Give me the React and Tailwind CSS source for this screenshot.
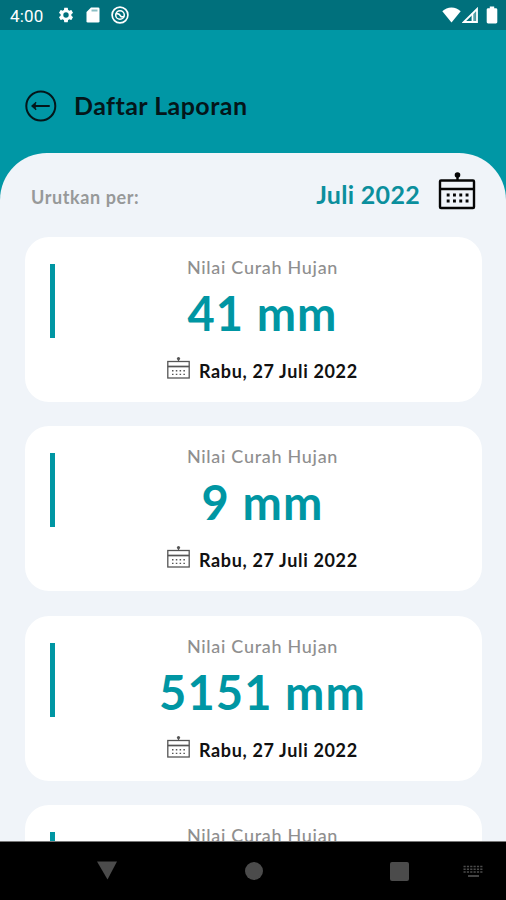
import React from 'react';

const reports = [
  { id: 1, value: 41, date: 'Rabu, 27 Juli 2022' },
  { id: 2, value: 9, date: 'Rabu, 27 Juli 2022' },
  { id: 3, value: 5151, date: 'Rabu, 27 Juli 2022' },
  { id: 4 },
];

function StatusBar() {
  return (
    <div className="flex h-[30px] shrink-0 items-center bg-[#00707c] pl-[10px] pr-[8px] text-white">
      <span className="w-[47px] pt-[2px] font-['Roboto',sans-serif] text-[17px] leading-[30px] tracking-[0.2px]">4:00</span>
      {/* Settings */}
      <svg className="h-[18px] w-[18px]" viewBox="0 0 24 24" fill="currentColor">
        <path d="M19.14 12.94c.04-.3.06-.61.06-.94 0-.32-.02-.64-.07-.94l2.03-1.58a.49.49 0 0 0 .12-.61l-1.92-3.32a.488.488 0 0 0-.59-.22l-2.39.96c-.5-.38-1.03-.7-1.62-.94l-.36-2.54a.484.484 0 0 0-.48-.41h-3.84c-.24 0-.43.17-.47.41l-.36 2.54c-.59.24-1.13.57-1.62.94l-2.39-.96a.488.488 0 0 0-.59.22L2.74 8.87c-.12.21-.08.47.12.61l2.03 1.58c-.05.3-.09.63-.09.94s.02.64.07.94l-2.03 1.58a.49.49 0 0 0-.12.61l1.92 3.32c.12.22.37.29.59.22l2.39-.96c.5.38 1.03.7 1.62.94l.36 2.54c.05.24.24.41.48.41h3.84c.24 0 .44-.17.47-.41l.36-2.54c.59-.24 1.13-.56 1.62-.94l2.39.96c.22.08.47 0 .59-.22l1.92-3.32a.49.49 0 0 0-.12-.61zM12 15.6A3.6 3.6 0 1 1 12 8.4a3.6 3.6 0 0 1 0 7.2z" />
      </svg>
      {/* SD card */}
      <svg className="ml-[11px] h-[16px] w-[14px]" viewBox="0 0 14 16" fill="currentColor">
        <path d="M5 .5h7.2a1.3 1.3 0 0 1 1.3 1.3v12.4a1.3 1.3 0 0 1-1.3 1.3H1.8A1.3 1.3 0 0 1 .5 14.200V5z" />
        <path d="M5.500 3.500h6" stroke="#00707c" strokeOpacity=".45" strokeWidth="2" />
      </svg>
      <svg className="ml-[11px] h-[18px] w-[18px]" viewBox="0 0 18 18" fill="none" stroke="currentColor">
        <circle cx="9" cy="9" r="7.900" strokeWidth="1.700" />
        <circle cx="9" cy="9" r="4.300" strokeWidth="1.500" />
        <path d="M5 7.800c2.800-.6 4 1 4.500 2s2.200 1.200 3.700.700" strokeWidth="1.600" />
      </svg>
      {/* Wifi, signal, battery */}
      <svg className="ml-auto h-[16px] w-[19px]" viewBox="0 0 19 16" fill="currentColor">
        <path d="M9.500 15.500L.3 4.300C2.800 1.800 6 .5 9.500.5s6.700 1.300 9.200 3.800z" />
      </svg>
      <svg className="ml-[1px] h-[16px] w-[16px]" viewBox="0 0 16 16" fill="none" stroke="currentColor">
        <path d="M1.800 15H15V2z" strokeWidth="1.800" />
        <path d="M10.500 6.500V15" strokeWidth="1.800" />
        <path d="M12.600 5v9" strokeOpacity=".35" strokeWidth="2.500" />
      </svg>
      <svg className="ml-[8px] h-[18px] w-[12px]" viewBox="0 0 12 18" fill="currentColor">
        <path d="M3.800.5h4.400v1.800h1.700c.8 0 1.400.6 1.400 1.400v12.400c0 .8-.6 1.400-1.400 1.400H2.100c-.8 0-1.400-.6-1.400-1.400V3.700c0-.8.6-1.400 1.400-1.400h1.700z" />
      </svg>
    </div>
  );
}

function CalendarIcon() {
  return (
    <svg className="h-[38px] w-[38px]" viewBox="0 0 38 38" fill="none" stroke="#050505">
      <rect x="2" y="8.500" width="34" height="27.500" rx="1" strokeWidth="2.400" />
      <path d="M2 17h34" strokeWidth="2.400" />
      <path d="M19.500 3v6" strokeWidth="2.400" />
      <circle cx="19.500" cy="3" r="2.800" fill="#050505" stroke="none" />
      <path d="M8.700 23h22M8.700 29h22" strokeWidth="2.900" strokeDasharray="2.900 3.400" />
    </svg>
  );
}

function SmallCalendarIcon() {
  return (
    <svg className="h-[23px] w-[23px]" viewBox="0 0 23 23" fill="none" stroke="#555">
      <rect x=".8" y="4.500" width="21.400" height="16.500" strokeWidth="1.300" />
      <path d="M.8 9.500h21.400" strokeWidth="1.700" />
      <path d="M11.500 1.500V5" strokeWidth="1.300" />
      <circle cx="11.500" cy="1.600" r="1.600" fill="#555" stroke="none" />
      <path d="M5 13.800h14M5 17.400h14" strokeWidth="1.400" strokeDasharray="1.500 2.300" />
    </svg>
  );
}

function ReportCard({ report }) {
  return (
    <div className="relative flex h-[165px] shrink-0 flex-col items-center rounded-[24px] bg-white">
      <span className="absolute left-[25px] top-[27px] h-[74px] w-[5px] bg-[#0096a3]" />
      <p className="mt-[17px] pl-[18px] text-[18px] font-medium leading-[26px] tracking-[0.7px] text-[#8f8f8f]">
        Nilai Curah Hujan
      </p>
      {report.date && (
        <>
          <p className="mt-[7px] pl-[18px] text-[47px] font-bold leading-[52px] tracking-[1.1px] text-[#0096a3]">
            {report.value} mm
          </p>
          <div className="mt-[16px] flex w-full items-center pl-[142px]">
            <SmallCalendarIcon />
            <span className="ml-[9px] mt-[5px] whitespace-nowrap text-[18px] font-bold leading-[22px] tracking-[0.65px] text-[#111]">
              {report.date}
            </span>
          </div>
        </>
      )}
    </div>
  );
}

function NavBar() {
  return (
    <div className="flex h-[59px] shrink-0 items-start border-t border-[#777] bg-black pl-[96px] pt-[18px] text-[#4b4b4b]">
      <svg className="mt-[1px] h-[19px] w-[22px]" viewBox="0 0 22 19" fill="currentColor">
        <path d="M1 .5h20L11.500 18.500z" />
      </svg>
      <span className="ml-[127px] mt-[2px] h-[18px] w-[18px] rounded-full bg-[#4b4b4b]" />
      <span className="ml-[127px] mt-[2px] h-[19px] w-[19px] rounded-[2px] bg-[#4b4b4b]" />
      <svg className="ml-[53px] mt-[5px] h-[13px] w-[22px]" viewBox="0 0 22 13" fill="none" stroke="currentColor">
        <path d="M1.500 1.500h19M1.500 4.300h19M1.500 7h19" strokeWidth="1.500" strokeDasharray="2.200 1.150" />
        <path d="M6 11h11" strokeWidth="1.800" />
      </svg>
    </div>
  );
}

export default function App() {
  return (
    <div className="flex h-[900px] w-[506px] flex-col overflow-hidden bg-[#0097a5] font-['Lato','Open_Sans',sans-serif]">
      <StatusBar />

      <header className="flex h-[123px] shrink-0 items-center pl-[25px] pt-[28px]">
        <svg className="h-[32px] w-[32px]" viewBox="0 0 32 32" fill="none" stroke="#04161a">
          <circle cx="15.800" cy="16" r="14.500" strokeWidth="2" />
          <path d="M8 16h16" strokeWidth="2" strokeLinecap="round" />
          <path d="M11 12L6.500 16l4.500 4-1-4z" fill="#04161a" strokeWidth=".8" />
        </svg>
        <h1 className="mb-[2px] ml-[17px] text-[25px] font-bold leading-[32px] tracking-[0.45px] text-[#04161a]">
          Daftar Laporan
        </h1>
      </header>

      <main className="flex min-h-0 flex-1 flex-col overflow-hidden rounded-t-[47px] bg-[#f0f4f9]">
        <div className="flex h-[84px] shrink-0 items-center pl-[31px] pr-[29px]">
          <span className="mt-[4px] text-[18px] font-bold tracking-[0.6px] text-[#979999]">Urutkan per:</span>
          <span className="ml-auto text-[25px] font-bold tracking-[0.3px] text-[#0b8f9d]">Juli 2022</span>
          <span className="mb-[9px] ml-[18px] mr-[1px]">
            <CalendarIcon />
          </span>
        </div>
        <div className="flex min-h-0 flex-1 flex-col gap-[24.49px] overflow-hidden pl-[25px] pr-[24px]">
          {reports.map((report) => (
            <ReportCard key={report.id} report={report} />
          ))}
        </div>
      </main>

      <NavBar />
    </div>
  );
}
